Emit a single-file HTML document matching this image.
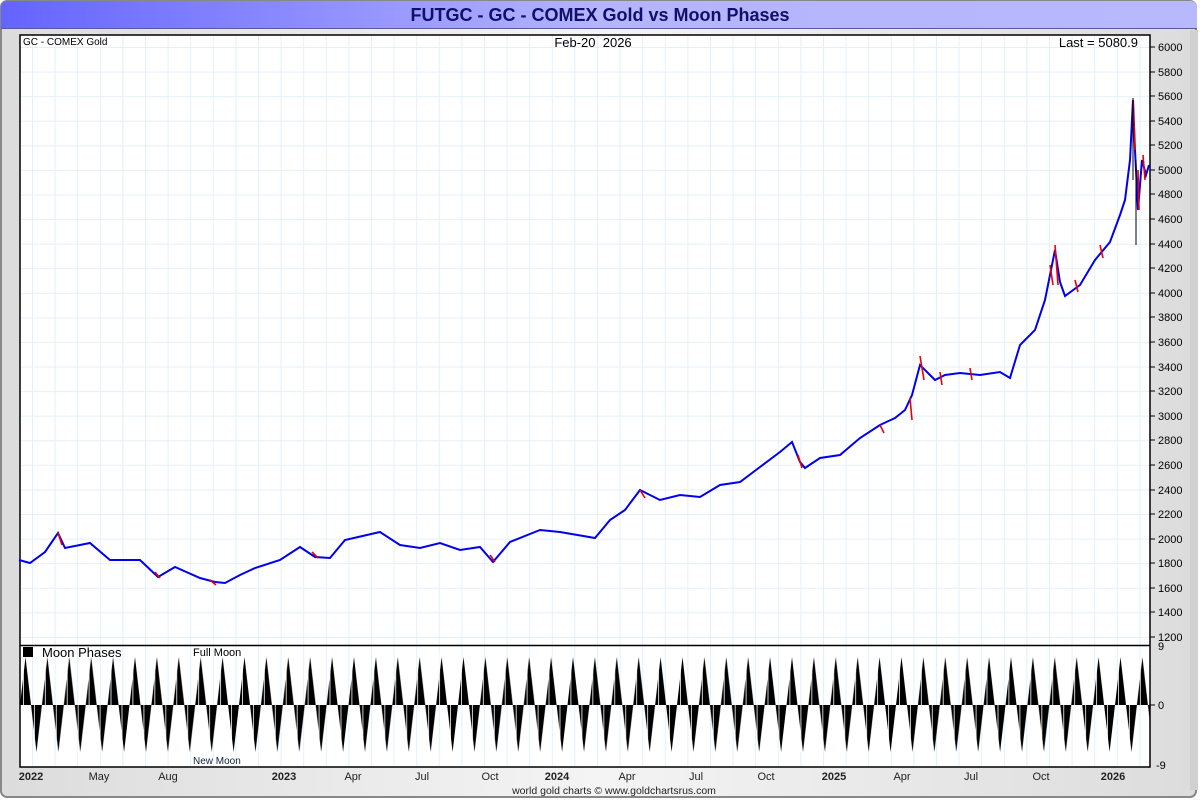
<!DOCTYPE html>
<html><head><meta charset="utf-8"><style>
html,body{margin:0;padding:0;width:1200px;height:800px;overflow:hidden;background:#fff;font-family:"Liberation Sans",sans-serif}
</style></head><body>
<svg width="1200" height="800" xmlns="http://www.w3.org/2000/svg" font-family="Liberation Sans, sans-serif">
<defs>
<linearGradient id="tg" x1="0" x2="1"><stop offset="0" stop-color="#6464ff"/><stop offset="0.5" stop-color="#b4b4ff"/><stop offset="1" stop-color="#b8b8ff"/></linearGradient>
<linearGradient id="bg" x1="0" x2="1"><stop offset="0" stop-color="#dcdcdc"/><stop offset="0.5" stop-color="#f4f4f4"/><stop offset="1" stop-color="#dcdcdc"/></linearGradient>
<pattern id="moon" patternUnits="userSpaceOnUse" x="20" y="0" width="21.9" height="800">
<path d="M0,705 L5.5,657 L11,705 Z M11,705 L16.5,752 L21.9,705 Z" fill="#000"/>
<rect x="3" y="655" width="0.8" height="50" fill="#fff"/><rect x="14" y="705" width="0.8" height="47" fill="#fff"/>
</pattern>
<pattern id="vg" patternUnits="userSpaceOnUse" x="32" y="0" width="22.6" height="800"><rect x="0" y="0" width="1" height="800" fill="#e4f0f8"/></pattern>
<pattern id="hg" patternUnits="userSpaceOnUse" x="0" y="47" width="1200" height="24.58"><rect x="0" y="0" width="1200" height="1" fill="#e4f0f8"/></pattern>
</defs>
<rect x="0" y="0" width="1200" height="800" fill="#fff"/>
<rect x="1" y="1" width="1195" height="796" rx="6" fill="url(#bg)" stroke="#888" stroke-width="2"/>
<rect x="1190" y="30" width="8" height="760" fill="#d0d0d0"/>
<path d="M1,28 L1,8 Q1,1 8,1 L1190,1 Q1197,1 1197,8 L1197,28 Z" fill="url(#tg)"/>
<line x1="1" y1="28.5" x2="1197" y2="28.5" stroke="#5a5a9a" stroke-width="1"/>
<text x="600" y="21" text-anchor="middle" font-size="18" font-weight="bold" fill="#10106a">FUTGC - GC - COMEX Gold vs Moon Phases</text>
<rect x="20" y="35" width="1130" height="732" fill="#fff"/>
<rect x="20" y="35" width="1130" height="732" fill="url(#vg)"/>
<rect x="20" y="35" width="1130" height="610" fill="url(#hg)"/>
<rect x="20" y="646" width="1130" height="120" fill="url(#moon)"/>
<rect x="20" y="35" width="1130" height="732" fill="none" stroke="#000" stroke-width="1.5"/>
<line x1="20" y1="645.5" x2="1150" y2="645.5" stroke="#000" stroke-width="1.5"/>
<text x="23" y="45" font-size="10" fill="#000">GC - COMEX Gold</text>
<text x="593" y="47" text-anchor="middle" font-size="13" fill="#000" xml:space="preserve">Feb-20  2026</text>
<text x="1138" y="47" text-anchor="end" font-size="13" fill="#000">Last = 5080.9</text>
<polyline fill="none" stroke="#0000ee" stroke-width="2" points="19,560 30,563 45,552 58,533 65,548 90,543 110,560 140,560 158,577 175,567 200,578 215,582 225,583 240,575 255,568 280,560 300,547 315,557 330,558 345,540 380,532 400,545 420,548 440,543 460,550 480,547 493,562 510,542 540,530 560,532 595,538 610,520 625,510 640,490 660,500 680,495 700,497 720,485 740,482 760,467 780,452 792,442 800,462 805,468 820,458 840,455 860,438 880,425 895,418 905,410 912,395 920,365 935,380 945,375 960,373 980,375 1000,372 1010,378 1020,345 1035,330 1045,300 1055,250 1060,282 1065,296 1080,285 1095,260 1110,242 1120,215 1125,200 1130,160 1133,100 1135,150 1138,210 1142,160 1146,175 1149,165"/>
<g stroke="#e00" stroke-width="1.6" fill="none">
<path d="M58,533 L62,545 M155,572 L160,578 M210,580 L216,585 M312,552 L318,558 M490,555 L495,562 M640,490 L645,498 M798,455 L802,468 M880,425 L884,433 M910,398 L912,420 M920,356 L924,380 M1055,245 L1058,285 M1133,100 L1135,150 M1138,170 L1139,210 M1143,155 L1145,180 M1050,265 L1053,285 M1100,245 L1103,258 M1075,280 L1078,292 M970,368 L972,380 M940,372 L942,385"/>
</g>
<g stroke="#000" stroke-width="1"><line x1="1133" y1="98" x2="1133" y2="180"/><line x1="1136" y1="160" x2="1136" y2="245"/></g>
<g font-size="11" fill="#000">
<g stroke="#000"><line x1="1150" y1="47" x2="1155" y2="47"/><line x1="1150" y1="72" x2="1155" y2="72"/><line x1="1150" y1="96" x2="1155" y2="96"/><line x1="1150" y1="121" x2="1155" y2="121"/><line x1="1150" y1="145" x2="1155" y2="145"/><line x1="1150" y1="170" x2="1155" y2="170"/><line x1="1150" y1="194" x2="1155" y2="194"/><line x1="1150" y1="219" x2="1155" y2="219"/><line x1="1150" y1="244" x2="1155" y2="244"/><line x1="1150" y1="268" x2="1155" y2="268"/><line x1="1150" y1="293" x2="1155" y2="293"/><line x1="1150" y1="317" x2="1155" y2="317"/><line x1="1150" y1="342" x2="1155" y2="342"/><line x1="1150" y1="367" x2="1155" y2="367"/><line x1="1150" y1="391" x2="1155" y2="391"/><line x1="1150" y1="416" x2="1155" y2="416"/><line x1="1150" y1="440" x2="1155" y2="440"/><line x1="1150" y1="465" x2="1155" y2="465"/><line x1="1150" y1="490" x2="1155" y2="490"/><line x1="1150" y1="514" x2="1155" y2="514"/><line x1="1150" y1="539" x2="1155" y2="539"/><line x1="1150" y1="563" x2="1155" y2="563"/><line x1="1150" y1="588" x2="1155" y2="588"/><line x1="1150" y1="612" x2="1155" y2="612"/><line x1="1150" y1="637" x2="1155" y2="637"/><line x1="1150" y1="705" x2="1155" y2="705"/></g>
<text x="1158" y="51">6000</text><text x="1158" y="76">5800</text><text x="1158" y="100">5600</text><text x="1158" y="125">5400</text><text x="1158" y="149">5200</text><text x="1158" y="174">5000</text><text x="1158" y="198">4800</text><text x="1158" y="223">4600</text><text x="1158" y="248">4400</text><text x="1158" y="272">4200</text><text x="1158" y="297">4000</text><text x="1158" y="321">3800</text><text x="1158" y="346">3600</text><text x="1158" y="371">3400</text><text x="1158" y="395">3200</text><text x="1158" y="420">3000</text><text x="1158" y="444">2800</text><text x="1158" y="469">2600</text><text x="1158" y="494">2400</text><text x="1158" y="518">2200</text><text x="1158" y="543">2000</text><text x="1158" y="567">1800</text><text x="1158" y="592">1600</text><text x="1158" y="616">1400</text><text x="1158" y="641">1200</text>
<text x="1158" y="650">9</text><text x="1158" y="709">0</text><text x="1156" y="769">-9</text>
</g>
<rect x="23" y="647" width="10" height="10" fill="#000"/>
<text x="42" y="657" font-size="13" fill="#000">Moon Phases</text>
<text x="193" y="656" font-size="11" fill="#000">Full Moon</text>
<text x="193" y="764" font-size="10" fill="#124">New Moon</text>
<g font-size="11" fill="#222" text-anchor="middle">
<text x="31" y="780" font-weight="bold">2022</text><text x="99" y="780">May</text><text x="168" y="780">Aug</text><text x="284" y="780" font-weight="bold">2023</text><text x="353" y="780">Apr</text><text x="422" y="780">Jul</text><text x="490" y="780">Oct</text><text x="557" y="780" font-weight="bold">2024</text><text x="627" y="780">Apr</text><text x="696" y="780">Jul</text><text x="766" y="780">Oct</text><text x="834" y="780" font-weight="bold">2025</text><text x="902" y="780">Apr</text><text x="971" y="780">Jul</text><text x="1041" y="780">Oct</text><text x="1113" y="780" font-weight="bold">2026</text>
</g>
<text x="614" y="794" text-anchor="middle" font-size="10.5" fill="#222">world gold charts © www.goldchartsrus.com</text>
</svg>
</body></html>
